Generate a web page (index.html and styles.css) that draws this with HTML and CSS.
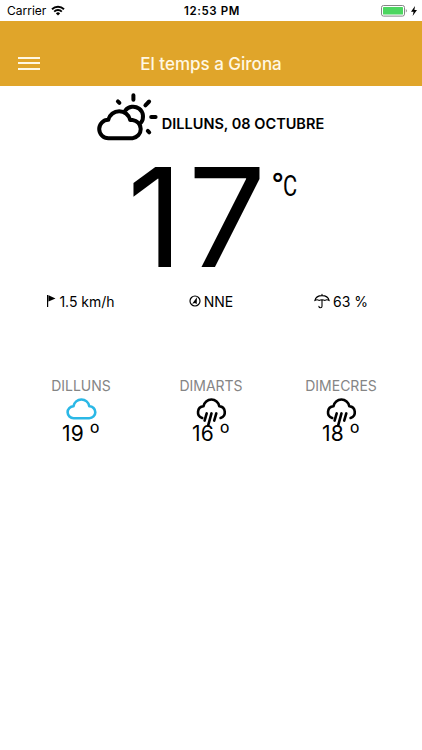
FILE: index.html
```html
<!DOCTYPE html>
<html lang="ca">
<head>
  <meta charset="utf-8">
  <title>El temps a Girona</title>
  <link rel="stylesheet" href="styles.css">
</head>
<body>
  <div class="status-bar">
    <div class="carrier">
      <span>Carrier</span>
      <svg class="wifi" viewBox="0 0 14 11">
        <path d="M1 4.2a8.6 8.6 0 0 1 12 0M3.2 6.6a5.4 5.4 0 0 1 7.6 0" fill="none" stroke="#000" stroke-width="1.9"/>
        <path d="M4.9 8.4a3 3 0 0 1 4.2 0L7 10.5z"/>
      </svg>
    </div>
    <div class="clock">12:53 PM</div>
    <div class="battery">
      <svg class="battery-icon" viewBox="0 0 26 12">
        <rect x=".5" y=".5" width="23" height="10.6" rx="2" fill="#fff" stroke="#858585"/>
        <rect x="2" y="2" width="20" height="7.6" rx=".6" fill="#4cd660"/>
        <path d="M24.8 4v3.6q1-.6 1-1.8t-1-1.8" fill="#858585"/>
      </svg>
      <svg class="bolt" viewBox="0 0 6 10"><path d="M4 0L0 5.8h2.6L1.6 10 6 4.1H3.4z"/></svg>
    </div>
  </div>

  <div class="header">
    <div class="menu"><span></span><span></span><span></span></div>
    <h1>El temps a Girona</h1>
  </div>

  <div class="today">
    <svg class="today-icon" viewBox="98 93 61 48">
      <path d="M108.5 138.2a9.2 9.2 0 0 1-.2-18.4a11.2 11.2 0 0 1 21.8 .1h2.4a9.2 9.2 0 0 1 0 18.3z"/>
      <path d="M125.2 110.6a9.7 9.7 0 1 1 15.8 12"/>
      <path d="M133.4 95.3v4.5M145.4 105.4l3.7-3.9M151.2 117h4.4M117.9 101.4l1.5 1.5M147.8 130.9l1.4 1.4"/>
    </svg>
    <span>DILLUNS, 08 OCTUBRE</span>
  </div>

  <div class="temperature">
    <span class="degrees">17</span>
    <span class="unit"><span class="ring">°</span><span class="celsius">C</span></span>
  </div>

  <div class="details">
    <div>
      <svg class="flag" viewBox="0 0 9 12"><path d="M0 0h1.2v12H0zM1.5 .2l7 3.4-7 2.9z"/></svg>
      <span>1.5 km/h</span>
    </div>
    <div>
      <svg class="compass" viewBox="0 0 12 12">
        <circle cx="6" cy="6" r="5" fill="none" stroke="#000" stroke-width="1.2"/>
        <path d="M7.9 2.2L3.2 8.8 6 8l1.7 1.3z"/>
      </svg>
      <span>NNE</span>
    </div>
    <div>
      <svg class="umbrella" viewBox="0 0 16 15">
        <path d="M.8 6.6C1.6 3.4 4.5 1.6 8 1.6s6.4 1.8 7.2 5q-2.2-1.6-4.2-.2Q8 5 5 6.4 3 5 .8 6.6zM8 .3v1.3M8 6v6.2q0 1.6-1.5 1.6T4.9 12.4" fill="none" stroke="#000" stroke-width="1.1" stroke-linejoin="round" stroke-linecap="round"/>
      </svg>
      <span>63 %</span>
    </div>
  </div>

  <div class="forecast">
    <div class="day">
      <h2>DILLUNS</h2>
      <svg class="cloud blue" viewBox="0 0 31 30">
        <path d="M7.7 20.2a6 6 0 0 1-.2-12a8 8 0 0 1 15.8 0a6 6 0 0 1 0 12z"/>
      </svg>
      <p>19 <span>º</span></p>
    </div>
    <div class="day">
      <h2>DIMARTS</h2>
      <svg class="cloud" viewBox="0 0 31 30">
        <path d="M6.2 20a6 6 0 0 1 1.3-11.7a8 8 0 0 1 15.8 0a6 6 0 0 1 1.3 11.7"/>
        <path d="M10.7 15.4l-2.1 7.2M15.5 15.4l-3.4 12.2M20.3 15.4l-2.1 7.2"/>
      </svg>
      <p>16 <span>º</span></p>
    </div>
    <div class="day">
      <h2>DIMECRES</h2>
      <svg class="cloud" viewBox="0 0 31 30">
        <path d="M6.2 20a6 6 0 0 1 1.3-11.7a8 8 0 0 1 15.8 0a6 6 0 0 1 1.3 11.7"/>
        <path d="M10.7 15.4l-2.1 7.2M15.5 15.4l-3.4 12.2M20.3 15.4l-2.1 7.2"/>
      </svg>
      <p>18 <span>º</span></p>
    </div>
  </div>
</body>
</html>
```
FILE: styles.css
```css
body {
  margin: 0;
  background: #fff;
  color: #000;
  font-family: Inter, sans-serif;
}

svg {
  display: block;
  flex: none;
  overflow: visible;
}

.status-bar {
  display: grid;
  grid-template-columns: 1fr auto 1fr;
  align-items: center;
  height: 21px;
  padding: 0 5px 0 7px;
  font-size: 12px;
}

.carrier,
.battery {
  display: flex;
  align-items: center;
}

.carrier {
  gap: 5px;
}

.wifi {
  width: 14px;
  height: 11px;
}

.clock {
  font-weight: 600;
  font-size: 11.5px;
  letter-spacing: .6px;
}

.battery {
  justify-content: flex-end;
  gap: 4px;
}

.battery-icon {
  width: 26px;
  height: 12px;
}

.bolt {
  width: 6px;
  height: 10px;
}

.header {
  display: grid;
  grid-template-columns: 22px 1fr 22px;
  align-items: center;
  height: 45px;
  padding: 20px 18px 0;
  background: #e0a52a;
  color: #fff8e4;
}

.header h1 {
  margin: 0;
  font-size: 17px;
  font-weight: 500;
  line-height: 22px;
  text-align: center;
}

.menu {
  display: grid;
  gap: 3.5px;
  margin-top: -1px;
}

.menu span {
  height: 2px;
  background: #fff8e4;
}

.today {
  display: flex;
  align-items: center;
  justify-content: center;
  gap: 3px;
  padding-top: 7px;
  height: 48px;
  font-size: 14.5px;
  font-weight: 600;
}

.today span {
  padding-top: 13px;
}

.today-icon {
  width: 61px;
  height: 48px;
  fill: none;
  stroke: #000;
  stroke-width: 4;
  stroke-linecap: round;
  stroke-linejoin: round;
}

.temperature {
  display: flex;
  justify-content: center;
  height: 140px;
  padding: 7px 0 0 4px;
}

.degrees {
  font-size: 138px;
  line-height: 138px;
  letter-spacing: 5px;
}

.unit {
  display: flex;
  width: 28px;
  font-family: Roboto, sans-serif;
  font-size: 29px;
  line-height: 76px;
}

.ring {
  width: 12px;
  font-size: 36px;
  line-height: 78px;
}

.celsius {
  transform: scaleX(.75);
  transform-origin: left;
}

.details,
.forecast {
  display: grid;
  grid-template-columns: repeat(3, 1fr);
  padding: 0 16px;
}

.details > div {
  display: flex;
  align-items: center;
  justify-content: center;
  gap: 3px;
  height: 20px;
  margin-top: 3px;
  font-size: 14px;
}

.flag {
  width: 9px;
  height: 12px;
}

.compass {
  width: 12px;
  height: 12px;
}

.umbrella {
  width: 16px;
  height: 15px;
}

.forecast {
  margin-top: 65px;
}

.day {
  display: grid;
  justify-items: center;
}

.day h2 {
  margin: 0;
  color: #858585;
  font-size: 14px;
  font-weight: 400;
  line-height: 20px;
}

.cloud {
  width: 31px;
  height: 30px;
  margin-top: 2px;
  fill: none;
  stroke: #000;
  stroke-width: 2.6;
  stroke-linecap: round;
  stroke-linejoin: round;
}

.blue {
  stroke: #2bb8e6;
}

/* the number sits right under the cloud, touching the rain */
.day p {
  margin: -7px 0 0;
  font-size: 21px;
  line-height: 26px;
}

.day p span {
  font-size: 24px;
  font-weight: 300;
  line-height: 1;
}
```
